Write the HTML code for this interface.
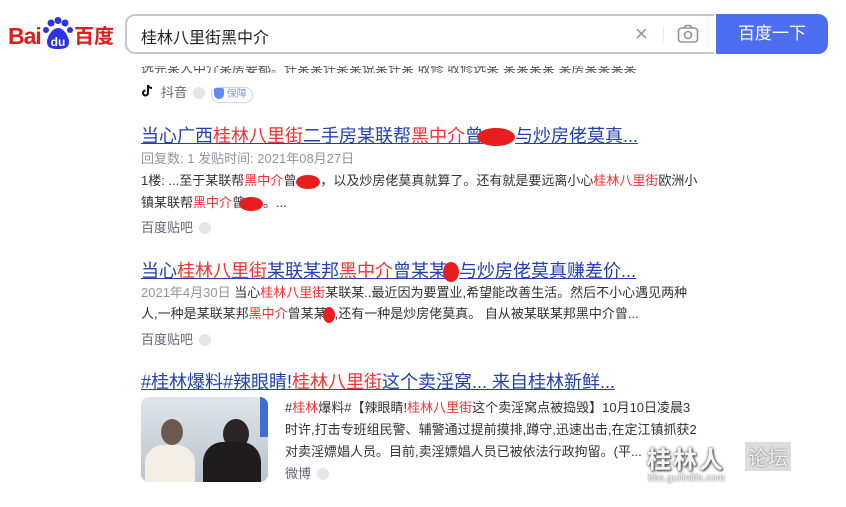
<!DOCTYPE html>
<html><head><meta charset="utf-8"><style>
body{margin:0;width:846px;height:507px;overflow:hidden;background:#fff;font-family:"Liberation Sans","Noto Sans CJK SC",sans-serif;position:relative}
.a{position:absolute;white-space:nowrap}
.t{font-size:18px;color:#2440b3;text-decoration:underline;text-decoration-thickness:1px}
.r{color:#f73131}
.b{font-size:13px;color:#333}
.g{color:#9195a3}
.s{font-size:13px;color:#626675}
.dd{display:inline-block;width:12px;height:12px;border-radius:50%;background:#e4e5e8;vertical-align:-2px;margin-left:6px}
.blot{display:inline-block;background:#e81e1e;border-radius:50%;vertical-align:middle}
</style></head><body>
<div class="a" style="left:8px;top:22px;font-size:23px;font-weight:bold;color:#de1e1e;letter-spacing:-1px;line-height:28px">Bai</div>
<svg class="a" style="left:42px;top:17px" width="32" height="34"><circle cx="9" cy="6" r="3.5" fill="#2d32e6"/><circle cx="16" cy="3.5" r="3.5" fill="#2d32e6"/><circle cx="23" cy="6" r="3.5" fill="#2d32e6"/><circle cx="4" cy="13" r="3" fill="#2d32e6"/><circle cx="28" cy="13" r="3" fill="#2d32e6"/><path d="M16 11 C10 11 5 20 5 25 C5 31 10 32 16 32 C22 32 27 31 27 25 C27 20 22 11 16 11Z" fill="#2d32e6"/><text x="16" y="29" text-anchor="middle" font-family="Liberation Sans" font-weight="bold" font-size="12" fill="#fff">du</text></svg>
<div class="a" style="left:74px;top:24px;font-size:20px;font-weight:bold;color:#de1e1e;line-height:26px">百度</div>
<div class="a" style="left:125px;top:14px;width:587px;height:36px;border:2px solid #c4c7ce;border-right:none;border-radius:10px 0 0 10px"></div>
<div class="a" style="left:141px;top:24px;font-size:16px;color:#222">桂林八里街黑中介</div>
<div class="a" style="left:635px;top:21px;font-size:22px;color:#9195a3">×</div>
<div class="a" style="left:663px;top:26px;width:1px;height:16px;background:#e8e8e8"></div>
<svg class="a" style="left:677px;top:24px" width="22" height="20"><rect x="1.5" y="4" width="19" height="14" rx="3" fill="none" stroke="#9195a3" stroke-width="1.6"/><path d="M7 4 L8.5 1.5 H13.5 L15 4" fill="none" stroke="#9195a3" stroke-width="1.6"/><circle cx="11" cy="11" r="3.5" fill="none" stroke="#9195a3" stroke-width="1.6"/></svg>
<div class="a" style="left:716px;top:14px;width:112px;height:40px;background:#4e6ef2;border-radius:0 10px 10px 0;color:#fff;font-size:17px;line-height:40px;text-align:center">百度一下</div>
<div class="a" style="left:141px;top:66px;height:7px;overflow:hidden;width:500px"><div class="b" style="margin-top:-8px;color:#555">选完某人中介某房要都。许某某许某某说某许某 收修 收修选某 某某某某 某房某某某某</div></div>
<svg class="a" style="left:140px;top:83px" width="16" height="16"><path d="M8 2 V10 A2.5 2.5 0 1 1 5.5 7.5 M8 2 C8.5 4 10 5 12 5" fill="none" stroke="#111" stroke-width="2"/></svg>
<div class="a s" style="left:161px;top:82px">抖音<span class="dd"></span><span style="display:inline-block;margin-left:6px;border:1px solid #c9d6fb;border-radius:8px;padding:0 5px 0 2px;font-size:10px;color:#7a95e8;line-height:14px"><span style="display:inline-block;width:10px;height:11px;background:#5e8af5;border-radius:2px 2px 5px 5px;vertical-align:-2px"></span> 保障</span></div>

<div class="a t" style="left:141px;top:122px">当心广西<span class="r">桂林八里街</span>二手房某联帮<span class="r">黑中介</span>曾<span class="blot" style="width:38px;height:18px;margin-left:-6px"></span>与炒房佬莫真...</div>
<div class="a b g" style="left:141px;top:148px">回复数: 1 发贴时间: 2021年08月27日</div>
<div class="a b" style="left:141px;top:170px">1楼: ...至于某联帮<span class="r">黑中介</span>曾<span class="blot" style="width:24px;height:14px"></span>，以及炒房佬莫真就算了。还有就是要远离小心<span class="r">桂林八里街</span>欧洲小</div>
<div class="a b" style="left:141px;top:192px">镇某联帮<span class="r">黑中介</span>曾<span class="blot" style="width:24px;height:14px;margin-left:-6px"></span>。...</div>
<div class="a s" style="left:141px;top:217px">百度贴吧<span class="dd"></span></div>

<div class="a t" style="left:141px;top:257px">当心<span class="r">桂林八里街</span>某联某邦<span class="r">黑中介</span>曾某某<span class="blot" style="width:16px;height:20px;margin-left:-4px"></span>与炒房佬莫真赚差价...</div>
<div class="a b" style="left:141px;top:282px"><span class="g">2021年4月30日</span> 当心<span class="r">桂林八里街</span>某联某..最近因为要置业,希望能改善生活。然后不小心遇见两种</div>
<div class="a b" style="left:141px;top:303px">人,一种是某联某邦<span class="r">黑中介</span>曾某某<span class="blot" style="width:12px;height:16px;margin-left:-4px"></span>,还有一种是炒房佬莫真。 自从被某联某邦黑中介曾...</div>
<div class="a s" style="left:141px;top:329px">百度贴吧<span class="dd"></span></div>

<div class="a t" style="left:141px;top:368px">#桂林爆料#辣眼睛!<span class="r">桂林八里街</span>这个卖淫窝... 来自桂林新鲜...</div>
<div class="a" style="left:141px;top:397px;width:127px;height:85px;border-radius:8px;overflow:hidden;background:#c9d2dc">
<div style="position:absolute;left:0;top:0;width:127px;height:85px;background:linear-gradient(#dfe5ea,#b9c4ce)"></div>
<div style="position:absolute;right:0;top:0;width:8px;height:40px;background:#3c6fd0"></div>
<div style="position:absolute;left:20px;top:22px;width:22px;height:26px;border-radius:50%;background:#6e5a4c"></div>
<div style="position:absolute;left:4px;top:48px;width:50px;height:40px;border-radius:18px 18px 0 0;background:#f3efe6"></div>
<div style="position:absolute;left:82px;top:22px;width:26px;height:30px;border-radius:50%;background:#2a2424"></div>
<div style="position:absolute;left:62px;top:45px;width:58px;height:45px;border-radius:20px 20px 0 0;background:#1f1c1e"></div>
</div>
<div class="a b" style="left:285px;top:397px">#<span class="r">桂林</span>爆料#【辣眼睛!<span class="r">桂林八里街</span>这个卖淫窝点被捣毁】10月10日凌晨3</div>
<div class="a b" style="left:285px;top:419px">时许,打击专班组民警、辅警通过提前摸排,蹲守,迅速出击,在定江镇抓获2</div>
<div class="a b" style="left:285px;top:441px">对卖淫嫖娼人员。目前,卖淫嫖娼人员已被依法行政拘留。(平...</div>
<div class="a s" style="left:285px;top:463px">微博<span class="dd"></span></div>
<div class="a" style="left:647px;top:440px;font-size:24px;font-weight:bold;color:#f4f4f4;text-shadow:0 0 3px #555,1px 1px 2px #333;letter-spacing:2px">桂林人</div>
<div class="a" style="left:745px;top:442px;font-size:20px;color:#eee;background:#ddd;padding:0 3px;text-shadow:0 0 2px #666">论坛</div>
<div class="a" style="left:648px;top:473px;font-size:10px;color:#eee;text-shadow:0 0 2px #555">bbs.guilinlife.com</div>
</body></html>
